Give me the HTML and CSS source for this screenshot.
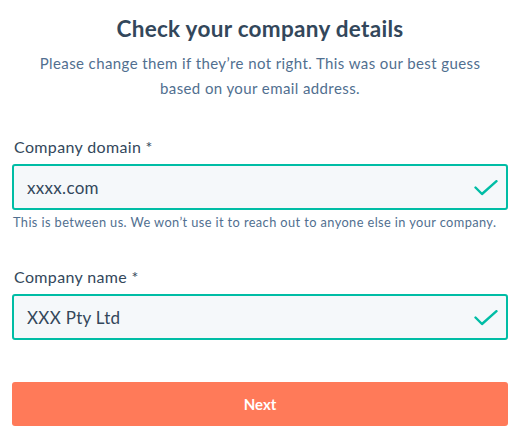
FILE: index.html
```html
<!DOCTYPE html>
<html>
<head>
<meta charset="utf-8">
<link rel="stylesheet" href="styles.css">
</head>
<body>
<div class="page">
  <h1 class="title">Check your company details</h1>
  <p class="subtitle">Please change them if they’re not right. This was our best guess based on your email address.</p>
  <div class="field field-domain">
    <label class="label">Company domain *</label>
    <div class="input">
      <span class="value">xxxx.com</span>
      <svg class="check" width="24" height="16" viewBox="0 0 24 16"><path d="M1.5 7.5 L8 14 L22.5 1.2" fill="none" stroke="#00bda5" stroke-width="2.4" stroke-linecap="round" stroke-linejoin="round"/></svg>
    </div>
    <p class="help">This is between us. We won’t use it to reach out to anyone else in your company.</p>
  </div>
  <div class="field field-name">
    <label class="label">Company name *</label>
    <div class="input">
      <span class="value">XXX Pty Ltd</span>
      <svg class="check" width="24" height="16" viewBox="0 0 24 16"><path d="M1.5 7.5 L8 14 L22.5 1.2" fill="none" stroke="#00bda5" stroke-width="2.4" stroke-linecap="round" stroke-linejoin="round"/></svg>
    </div>
  </div>
  <button class="next">Next</button>
</div>
</body>
</html>
```
FILE: styles.css
```css
html, body { margin: 0; padding: 0; background: #fff; }
body { font-family: "Lato", "Noto Sans", sans-serif; color: #33475b; }
.page { width: 496px; padding: 0 15px 0 12px; }
.title { margin: 14px 0 0; font-size: 22.5px; font-weight: 700; text-align: center; line-height: 30px; letter-spacing: 0.3px; }
.subtitle { margin: 7px 0 0; font-size: 15px; line-height: 25px; text-align: center; color: #516f90; padding: 0 20px; letter-spacing: 0.4px; }
.field-domain { margin-top: 36px; }
.field-name { margin-top: 36px; }
.label { display: block; font-size: 16px; line-height: 20px; padding-left: 2px; letter-spacing: 0.35px; }
.input { margin-top: 7px; height: 42px; border: 2px solid #00bda5; border-radius: 3px; background: #f5f8fa; display: flex; align-items: center; justify-content: space-between; padding: 0 8px 0 13px; }
.value { font-size: 17px; color: #33475b; letter-spacing: 0.3px; }
.check { display: block; margin-top: 1px; }
.help { margin: 3px 0 0; padding-left: 1px; font-size: 12.8px; line-height: 18px; color: #516f90; letter-spacing: 0.4px; }
.next { display: block; margin-top: 42px; width: 496px; height: 44px; border: none; border-radius: 3px; background: #ff7a59; color: #fff; font-family: "Lato", sans-serif; font-size: 15px; font-weight: 700; }
```
